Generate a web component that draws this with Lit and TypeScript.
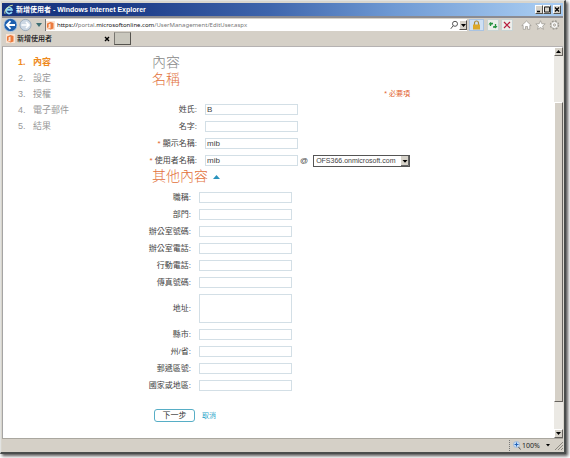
import { LitElement, html, css, svg, nothing } from "lit";
import { customElement, property, state } from "lit/decorators.js";

interface Field {
  id: string;
  label: string;
  value?: string;
  required?: boolean;
  multiline?: boolean;
  domain?: boolean;
}

const nameFields: Field[] = [
  { id: "last-name", label: "姓氏:", value: "B" },
  { id: "first-name", label: "名字:" },
  { id: "display-name", label: "顯示名稱:", value: "mib", required: true },
  { id: "user-name", label: "使用者名稱:", value: "mib", required: true, domain: true },
];

const otherFields: Field[] = [
  { id: "job-title", label: "職稱:" },
  { id: "department", label: "部門:" },
  { id: "office-number", label: "辦公室號碼:" },
  { id: "office-phone", label: "辦公室電話:" },
  { id: "mobile", label: "行動電話:" },
  { id: "fax", label: "傳真號碼:" },
  { id: "address", label: "地址:", multiline: true },
  { id: "city", label: "縣市:" },
  { id: "state", label: "州/省:" },
  { id: "zip", label: "郵遞區號:" },
  { id: "country", label: "國家或地區:" },
];

const steps = ["內容", "設定", "授權", "電子郵件", "結果"];

const pageIcon = svg`
  <rect x="0" y="0" width="9" height="9" fill="#fbe3d2"/>
  <path d="M1 2.500l3.500-1.500 3 1v5.500l-3 1L1 7l3.500.400V2.600L2.600 3.200v3L1 7z" fill="#ec7a3c"/>`;

@customElement("browser-chrome")
export class BrowserChrome extends LitElement {
  @property() heading = "";

  static styles = css`
    :host { display: block; }
    button { border: 0; padding: 0; margin: 0; background: none; display: flex; align-items: center; justify-content: center; font: inherit; }
    svg { display: block; flex: none; }
    .title {
      display: flex; align-items: center; height: 13px; padding: 0 2px 0 2px;
      background: linear-gradient(90deg, #16327d 0%, #1d3c88 22%, #3f66ad 48%, #6f9ad4 70%, #a6caf0 96%);
      color: #fff; font-family: "Liberation Sans", "Noto Sans CJK TC", sans-serif; font-weight: 700; font-size: 7px; line-height: 13px;
    }
    .title-text { flex: 1; margin-left: 2px; white-space: nowrap; }
    .win { width: 8px; height: 9px; background: #d6d2c9; border: 1px solid; border-color: #fff #55524d #55524d #fff; box-sizing: border-box; }
    .win.close { margin-left: 2px; }
    .address { display: flex; align-items: center; height: 15px; padding: 1px 2px 0 1px; box-sizing: border-box; border-top: 2px solid #8b8b91; background: #d5d0c7; }
    .drop { width: 12px; height: 12px; }
    .url { flex: 1; min-width: 0; display: flex; align-items: center; height: 12px; background: #fff; border-left: 1px solid #777; box-sizing: border-box; }
    .link { flex: 1; margin-left: 2px; font-size: 6px; line-height: 12px; color: #777; white-space: nowrap; }
    .host { color: #111; }
    .caret { width: 8px; height: 10px; background: #d6d2c9; border: 1px solid; border-color: #fff #55524d #55524d #fff; box-sizing: border-box; }
    .tool { width: 12px; height: 12px; border: 1px solid #c9d3d3; background: #eceeea; box-sizing: border-box; }
    .tool.lock { width: 15px; background: #cfe0f4; border-color: #a9c3e2; margin: 0 3px 0 2px; }
    .tool.stop { margin: 0 6px 0 2px; }
    .plain { width: 14px; height: 12px; }
    .tabs { display: flex; align-items: center; height: 15px; background: #d5d0c7; padding-left: 4px; box-sizing: border-box; }
    .tab { display: flex; align-items: center; width: 108px; height: 15px; padding-right: 4px; box-sizing: border-box; }
    .tab-name { flex: 1; margin-left: 2px; font-size: 7px; font-weight: 500; line-height: 15px; color: #111; }
    .new-tab { width: 17px; height: 13px; background: #c9c7bd; border: 1px solid; border-color: #aaa79f #55534e #55534e #77756f; box-sizing: border-box; }
  `;

  render() {
    return html`
      <header class="title">
        <svg width="10" height="11" viewBox="0 0 10 11" fill="none">
          <path d="M7.800 7.800A3 3 0 1 1 8 5.800H3" stroke="#8fd8f5" stroke-width="1.700"/>
          <path d="M1 9.800C-.5 7 4 1.500 8.800 1.200" stroke="#d9e8a0" stroke-width="1"/>
        </svg>
        <span class="title-text">${this.heading} - Windows Internet Explorer</span>
        <button class="win" aria-label="最小化"><svg width="6" height="7"><path d="M1 5.500h3" stroke="#000" stroke-width="1.500"/></svg></button>
        <button class="win" aria-label="最大化"><svg width="6" height="7"><path d="M.5 1h5M.5 1v5h5V1" fill="none" stroke="#222"/></svg></button>
        <button class="win close" aria-label="關閉"><svg width="6" height="7"><path d="M1 1.500l4 4M5 1.500l-4 4" stroke="#000" stroke-width="1.300"/></svg></button>
      </header>
      <div class="address">
        <button aria-label="上一頁"><svg width="15" height="14" viewBox="0 0 15 14">
          <circle cx="7.500" cy="7" r="6.600" fill="#1d5fae" stroke="#c5d7ea" stroke-width=".8"/>
          <path d="M12 7H4M7.500 3.200L3.800 7l3.700 3.800" fill="none" stroke="#fff" stroke-width="1.800"/></svg></button>
        <button aria-label="下一頁"><svg width="15" height="14" viewBox="0 0 15 14">
          <circle cx="7.500" cy="7" r="5.600" fill="#cdd8e4" stroke="#8fa3b8" stroke-width=".8"/>
          <path d="M3.500 7H11M8 4l3 3-3 3" fill="none" stroke="#fff" stroke-width="1.600"/></svg></button>
        <button class="drop" aria-label="記錄"><svg width="6" height="4"><path d="M0 0h6L3 4z" fill="#3d6e72"/></svg></button>
        <div class="url">
          <svg width="9" height="9">${pageIcon}</svg>
          <span class="link"><span class="host">https://</span>portal.<span class="host">microsoftonline.com</span>/UserManagement/EditUser.aspx</span>
          <svg width="9" height="10" viewBox="0 0 9 10"><circle cx="5" cy="3.800" r="2.500" fill="none" stroke="#555"/><path d="M3.200 5.700L.8 8.800" stroke="#555"/></svg>
          <button class="caret" aria-label="網址清單"><svg width="5" height="3"><path d="M0 0h5L2.500 3z"/></svg></button>
        </div>
        <button class="tool lock" aria-label="安全性"><svg width="9" height="10" viewBox="0 0 9 10"><path d="M2.500 5V3a2 2 0 0 1 4 0v2" fill="none" stroke="#a98a3c" stroke-width="1.200"/><rect x="1" y="4.500" width="7" height="5" fill="#dca829"/></svg></button>
        <button class="tool" aria-label="重新整理"><svg width="10" height="10" viewBox="0 0 10 10"><path d="M2.500 6V3.500h2.500M7.500 4v3H5" fill="none" stroke="#279440" stroke-width="1.300"/><path d="M.5 4.500l2-2.500 2 2.500zM5.500 6l2 2.500L9.500 6z" fill="#279440"/></svg></button>
        <button class="tool stop" aria-label="停止"><svg width="8" height="8"><path d="M1 1l6 6M7 1L1 7" stroke="#b81e3e" stroke-width="1.200"/></svg></button>
        <button class="plain" aria-label="首頁"><svg width="11" height="10" viewBox="0 0 11 10"><path d="M.8 5.500L5.500 1l4.700 4.500H8.800V9.300H6.500V6.500h-2v2.800H2.200V5.500z" fill="#fff" stroke="#99968f" stroke-width=".7"/></svg></button>
        <button class="plain" aria-label="我的最愛"><svg width="11" height="10" viewBox="0 0 11 10"><path d="M5.500.7l1.300 3 3.400.2-2.600 2.200.9 3.200-3-1.800-3 1.800.9-3.200L.8 3.900l3.400-.2z" fill="#fff" stroke="#99968f" stroke-width=".7"/></svg></button>
        <button class="plain" aria-label="工具"><svg width="11" height="10" viewBox="0 0 11 10"><circle cx="5.500" cy="5" r="3.900" fill="none" stroke="#99968f" stroke-width="1.600" stroke-dasharray="1.800 1.260"/><circle cx="5.500" cy="5" r="3.300" fill="#fff" stroke="#aaa79f" stroke-width=".6"/><circle cx="5.500" cy="5" r="1.300" fill="#d5d0c7" stroke="#99968f" stroke-width=".6"/></svg></button>
      </div>
      <nav class="tabs">
        <div class="tab">
          <svg width="9" height="9">${pageIcon}</svg>
          <span class="tab-name">${this.heading}</span>
          <button aria-label="關閉索引標籤"><svg width="6" height="6"><path d="M1 1l4 4M5 1L1 5" stroke="#000" stroke-width="1.400"/></svg></button>
        </div>
        <button class="new-tab" aria-label="新索引標籤"></button>
      </nav>`;
  }
}

@customElement("app-root")
export class AppRoot extends LitElement {
  @state() private expanded = true;

  static styles = css`
    :host {
      display: flex; min-height: 100vh; box-sizing: border-box; padding: 0 4px 4px 0; background: #fff;
      font-family: "Liberation Sans", "Noto Sans CJK TC", sans-serif; color: #444;
    }
    .window {
      flex: 1; min-width: 0; display: flex; flex-direction: column; box-sizing: border-box;
      border: 1px solid #e2e3e1; border-right: 2px solid #4a4d4c; border-bottom: 2px solid #4a4d4c;
      padding: 2px 1px 0 1px; background: #d8d5cd; box-shadow: 2px 2px 3px #555;
    }
    browser-chrome { font-family: "Noto Sans", "Noto Sans CJK TC", sans-serif; }
    .view { flex: 1; display: flex; background: #fff; border-top: 1px solid #b5b2b2; border-left: 1px solid #a5a5a5; }
    .page { flex: 1; min-width: 0; display: grid; grid-template-columns: 134px minmax(0, 258px); align-content: start; padding: 7px 0 16px 15px; }
    .steps { list-style: none; margin: 0; padding: 0; font-size: 9px; line-height: 16px; color: #999; }
    .step { display: grid; grid-template-columns: 15px auto; }
    .current { color: #ee8a1d; font-weight: 700; }
    h1, h2 { margin: 0; font-size: 14px; line-height: 17px; font-weight: 300; color: #888; }
    h2 { color: #e2703a; }
    .toggle { display: flex; align-items: center; gap: 5px; border: 0; padding: 0; background: none; font: inherit; color: inherit; }
    .note { margin: 0; padding-bottom: 4px; text-align: right; font-size: 7px; line-height: 12px; color: #e2622b; }
    .fields { display: grid; gap: 6px; margin-bottom: 2px; font-size: 8px; }
    .other { margin: 7px 0 18px; }
    .row { display: grid; grid-template-columns: 45px 93px auto; column-gap: 8px; align-items: center; }
    .other .row { grid-template-columns: 39px 93px; }
    .row label { justify-self: end; white-space: nowrap; line-height: 11px; }
    .star { color: #e2622b; }
    .box {
      display: block; width: 100%; height: 11px; box-sizing: border-box; margin: 0; padding: 0 1px; border: 1px solid #d3dfe6; border-radius: 0;
      background: #fff; color: #444; font-family: inherit; font-size: 8px; line-height: 9px; outline: 0; resize: none;
    }
    .area { height: 29px; }
    .domain { display: flex; align-items: center; height: 11px; gap: 5px; margin-left: -6px; }
    .pick { position: relative; display: flex; }
    select {
      appearance: none; width: 97px; height: 12px; margin: 0; padding: 0 0 0 2px; box-sizing: border-box; border: 1px solid #555; border-radius: 0;
      background: #fff; color: #444; font-family: inherit; font-size: 7px; line-height: 10px;
    }
    .arrow { position: absolute; right: 1px; top: 1px; width: 8px; height: 10px; background: #d6d2c9; pointer-events: none; }
    .actions { display: flex; align-items: center; gap: 7px; padding-left: 2px; }
    .next { width: 41px; height: 13px; padding: 0; box-sizing: border-box; border: 1px solid #57aec6; border-radius: 3px; background: #fff; color: #333; font-family: inherit; font-size: 8px; line-height: 10px; }
    .cancel { color: #2aa5c9; font-size: 7px; line-height: 13px; text-decoration: none; }
    .scroll { width: 9px; display: flex; flex-direction: column; background: #ebe9e4; }
    .scroll button { height: 9px; padding: 0; border: 1px solid; border-color: #fff #66635e #66635e #fff; background: #d6d2c9; display: flex; align-items: center; justify-content: center; }
    .track { flex: 1; display: grid; grid-template-rows: 46fr 303fr 27fr; }
    .thumb { grid-row: 2; background: #d5d0c7; border: 1px solid; border-color: #fff #66635e #66635e #fff; }
    .status { display: flex; justify-content: flex-end; height: 11px; padding: 1px 0; border-top: 1px solid #aaa79f; background: #d5d0c7; font-family: "Noto Sans", sans-serif; font-size: 7px; line-height: 11px; color: #222; }
    .zoom { display: flex; align-items: center; width: 41px; padding: 0 0 0 3px; gap: 1px; border: 0; border-left: 1px dotted #777; background: none; font: inherit; color: inherit; }
    .zoom-value { flex: 1; text-align: left; }
    .grip { margin-left: 4px; }
    svg { display: block; flex: none; }
  `;

  private field(f: Field) {
    return html`<div class="row">
      <label for=${f.id}>${f.required ? html`<span class="star">* </span>` : nothing}${f.label}</label>
      ${f.multiline
        ? html`<textarea class="box area" id=${f.id}></textarea>`
        : html`<input class="box" id=${f.id} type="text" .value=${f.value ?? ""} />`}
      ${f.domain
        ? html`<div class="domain"><span>@</span><span class="pick">
            <select aria-label="網域"><option>OFS366.onmicrosoft.com</option></select>
            <svg class="arrow" viewBox="0 0 8 10"><path d="M0 9.500h7.500V0" fill="none" stroke="#666"/><path d="M1.500 4h5L4 6.800z"/></svg>
          </span></div>`
        : nothing}
    </div>`;
  }

  render() {
    return html`<div class="window">
      <browser-chrome heading="新增使用者"></browser-chrome>
      <div class="view">
        <div class="page">
          <ol class="steps">
            ${steps.map((s, i) => html`<li class="step ${i === 0 ? "current" : ""}"><span>${i + 1}.</span><span>${s}</span></li>`)}
          </ol>
          <main>
            <h1>內容</h1>
            <h2>名稱</h2>
            <p class="note">* 必要項</p>
            <div class="fields">${nameFields.map((f) => this.field(f))}</div>
            <h2><button class="toggle" aria-expanded=${this.expanded} @click=${() => (this.expanded = !this.expanded)}>
              其他內容<svg width="7" height="4"><path d="M0 4l3.500-4L7 4z" fill="#2a93bd"/></svg>
            </button></h2>
            <div class="fields other" ?hidden=${!this.expanded}>${otherFields.map((f) => this.field(f))}</div>
            <div class="actions"><button class="next">下一步</button><a class="cancel" href="#">取消</a></div>
          </main>
        </div>
        <div class="scroll">
          <button aria-label="向上"><svg width="5" height="3"><path d="M0 3h5L2.500 0z"/></svg></button>
          <div class="track"><div class="thumb"></div></div>
          <button aria-label="向下"><svg width="5" height="3"><path d="M0 0h5L2.500 3z"/></svg></button>
        </div>
      </div>
      <footer class="status">
        <button class="zoom">
          <svg width="8" height="9" viewBox="0 0 8 9"><circle cx="3.500" cy="3.500" r="3" fill="#d5e8fa" stroke="#7fa6d6" stroke-width=".6"/><path d="M3.500 1.500v4M1.500 3.500h4" stroke="#2463b8" stroke-width="1.200"/><path d="M5.500 6l2 2.500" stroke="#555"/></svg>
          <span class="zoom-value">100%</span>
          <svg width="4" height="3"><path d="M0 0h4L2 2.500z"/></svg>
        </button>
        <svg class="grip" width="9" height="10" viewBox="0 0 9 10"><path d="M1 10l8-8M4 10l5-5M7 10l2-2" stroke="#8b8880"/></svg>
      </footer>
    </div>`;
  }
}
